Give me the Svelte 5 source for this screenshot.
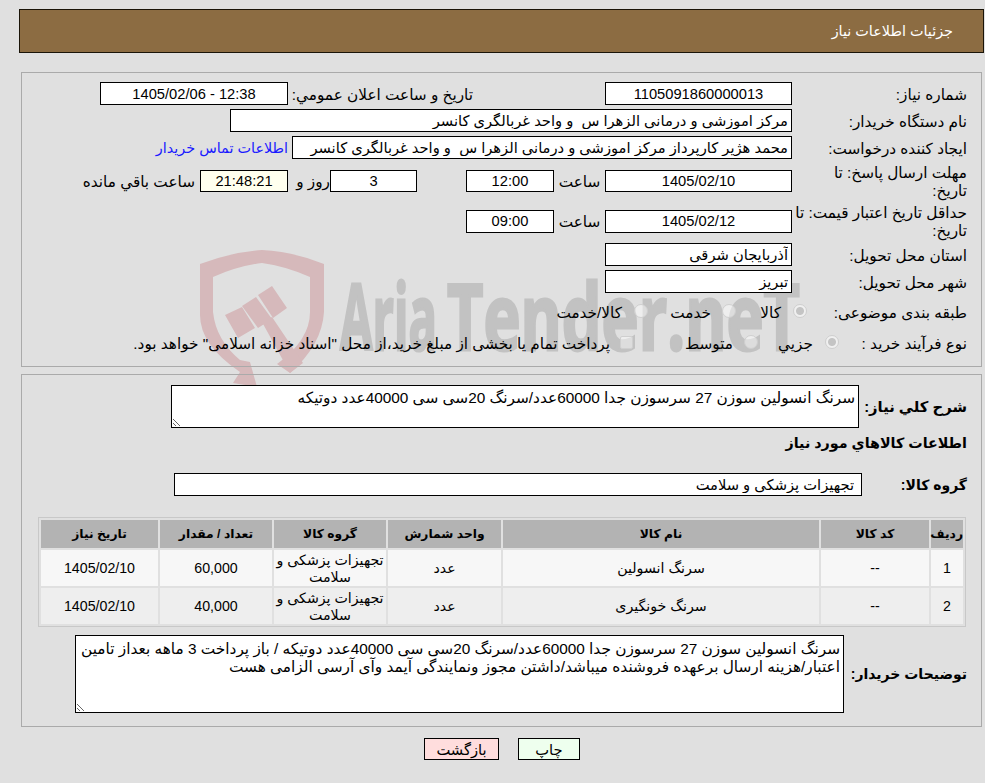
<script>
  const goods = [
    { id: '1', code: '--', name: 'سرنگ انسولین', unit: 'عدد', group: 'تجهیزات پزشکی و سلامت', qty: '60,000', date: '1405/02/10' },
    { id: '2', code: '--', name: 'سرنگ خونگیری', unit: 'عدد', group: 'تجهیزات پزشکی و سلامت', qty: '40,000', date: '1405/02/10' }
  ];
  const summary = 'سرنگ انسولین سوزن 27 سرسوزن جدا 60000عدد/سرنگ 20سی سی 40000عدد دوتیکه';
  const notes = 'سرنگ انسولین سوزن 27 سرسوزن جدا 60000عدد/سرنگ 20سی سی 40000عدد دوتیکه / باز پرداخت 3 ماهه بعداز تامین اعتبار/هزینه ارسال برعهده فروشنده میباشد/داشتن مجوز ونمایندگی آیمد وآی آرسی الزامی هست';
</script>

<div class="page" dir="rtl">
  <svg class="watermark" width="985" height="783" viewBox="0 0 985 783" aria-hidden="true">
    <path class="shield" fill-rule="evenodd" d="M200 264 Q232 252 262 250 Q295 252 324 264 L324 312 Q322 345 290 373 L277 364 Q310 340 310 312 L310 277 Q285 266 262 263 Q238 266 213 277 L213 312 Q216 340 240 360 L250 362 L257 387 L233 383 L240 372 Q200 345 200 315 Z" />
    <path class="shield" d="M225 315 L242 307 L255 328 L238 338 Z M242 306 L256 297 L272 319 L258 328 Z M258 295 L272 286 L287 308 L273 318 Z M262 322 L272 317 L303 363 L290 373 Z" />
    <text class="brand" x="340" y="350" textLength="97" lengthAdjust="spacingAndGlyphs">Aria</text>
    <text class="brand" x="447" y="350" textLength="353" lengthAdjust="spacingAndGlyphs">Tender.neT</text>
  </svg>

  <div class="head">جزئیات اطلاعات نیاز</div>

  <section class="panel top">
    <div class="row">
      <span class="label">شماره نیاز:</span>
      <input class="in date" readonly value="1105091860000013" />
      <span class="announce">تاریخ و ساعت اعلان عمومي:</span>
      <input class="in announce-val" readonly value="12:38 - 1405/02/06" />
    </div>
    <div class="row">
      <span class="label">نام دستگاه خریدار:</span>
      <input class="in left buyer" readonly value="مرکز اموزشی و درمانی الزهرا س  و واحد غربالگری کانسر" />
    </div>
    <div class="row">
      <span class="label">ایجاد کننده درخواست:</span>
      <input class="in left creator" readonly value="محمد هژیر کارپرداز مرکز اموزشی و درمانی الزهرا س  و واحد غربالگری کانسر" />
      <a class="contact" href="#contact">اطلاعات تماس خریدار</a>
    </div>
    <div class="row tall">
      <span class="label">مهلت ارسال پاسخ: تا<br />تاریخ:</span>
      <input class="in date short" readonly value="1405/02/10" />
      <span class="at">ساعت</span>
      <input class="in time short" readonly value="12:00" />
      <input class="in days short" readonly value="3" />
      <span class="day-word">روز و</span>
      <input class="in time short timer" readonly value="21:48:21" />
      <span class="remain">ساعت باقي مانده</span>
    </div>
    <div class="row tall">
      <span class="label">حداقل تاریخ اعتبار قیمت: تا<br />تاریخ:</span>
      <input class="in date" readonly value="1405/02/12" />
      <span class="at">ساعت</span>
      <input class="in time" readonly value="09:00" />
    </div>
    <div class="row">
      <span class="label">استان محل تحویل:</span>
      <input class="in left date" readonly value="آذربایجان شرقی" />
    </div>
    <div class="row">
      <span class="label">شهر محل تحویل:</span>
      <input class="in left date" readonly value="تبریز" />
    </div>
    <div class="row kind">
      <span class="label narrow">طبقه بندی موضوعی:</span>
      <span class="radio on"></span><span class="opt kala">کالا</span>
      <span class="radio"></span><span class="opt service">خدمت</span>
      <span class="radio"></span><span class="opt both">کالا/خدمت</span>
    </div>
    <div class="row process">
      <span class="label tiny">نوع فرآیند خرید :</span>
      <span class="radio on"></span><span class="opt minor">جزيي</span>
      <span class="radio"></span><span class="opt mid">متوسط</span>
      <span class="check"></span>
      <span class="pay">پرداخت تمام یا بخشی از مبلغ خرید،از محل "اسناد خزانه اسلامی" خواهد بود.</span>
    </div>
  </section>

  <section class="panel bottom">
    <div class="summary">
      <b class="blabel sum-label">شرح كلي نياز:</b>
      <textarea class="area sum-area" readonly value={summary}></textarea>
    </div>
    <h3>اطلاعات كالاهاي مورد نياز</h3>
    <div class="group">
      <b class="blabel group-label">گروه کالا:</b>
      <input class="in left group-val" readonly value="تجهیزات پزشکی و سلامت" />
    </div>

    <table>
      <thead>
        <tr>
          <th class="c1">ردیف</th>
          <th class="c2">کد کالا</th>
          <th class="c3">نام کالا</th>
          <th class="c4">واحد شمارش</th>
          <th class="c5">گروه کالا</th>
          <th class="c6">تعداد / مقدار</th>
          <th class="c7">تاریخ نیاز</th>
        </tr>
      </thead>
      <tbody>
        {#each goods as g}
          <tr>
            <td>{g.id}</td>
            <td>{g.code}</td>
            <td>{g.name}</td>
            <td>{g.unit}</td>
            <td class="wrap">{g.group}</td>
            <td>{g.qty}</td>
            <td>{g.date}</td>
          </tr>
        {/each}
      </tbody>
    </table>

    <div class="notes">
      <b class="blabel notes-label">توضیحات خریدار:</b>
      <textarea class="area notes-area" readonly value={notes}></textarea>
    </div>
  </section>

  <div class="actions">
    <button class="btn print">چاپ</button>
    <button class="btn back">بازگشت</button>
  </div>
</div>

<style>
  :global(body) { background: #e0e0e0; }
  .page {
    position: relative; width: 985px; height: 783px; box-sizing: border-box;
    padding-top: 9px; overflow: hidden;
    font-family: "Liberation Sans", "DejaVu Sans", sans-serif; font-size: 15.3px; color: #000;
  }
  .watermark { position: absolute; left: 0; top: 0; z-index: -1; direction: ltr; }
  .shield { fill: #d6b9bb; }
  .brand {
    fill: #c2c2c2; stroke: #c2c2c2; stroke-width: 3px;
    font-family: "Open Sans", sans-serif; font-weight: 700; font-size: 92px;
  }

  .head {
    box-sizing: border-box; width: 965px; height: 44px; margin-right: 1px;
    padding: 13px 30px 0 0;
    background: #8c6c42; border: 1px solid #1a1408; color: #fff; font-size: 14.4px;
  }
  .panel { box-sizing: border-box; width: 961px; margin-right: 3px; border: 1px solid #aaa; padding-right: 14px; }
  .top { height: 295px; margin-top: 19px; padding-top: 7px; }
  .bottom { height: 353px; margin-top: 7px; padding-top: 10px; }

  .row { display: flex; align-items: center; height: 27px; }
  .row.tall { height: 40px; }
  .row.kind { height: 32px; }
  .row.process { height: 30px; }
  .row > span:not(.radio, .check) { padding-top: 2px; }
  .row.kind > span:not(.radio, .check), .row.process > span:not(.radio, .check) { padding-top: 4px; }
  .label { box-sizing: border-box; width: 175px; flex-shrink: 0; white-space: nowrap; line-height: 18px; }
  .label.narrow { width: 160px; }
  .label.tiny { width: 128px; }

  .in {
    box-sizing: border-box; height: 23px; padding: 0 3px; margin: 0;
    border: 1px solid #000; border-radius: 0; background: #fff; color: #000;
    font: inherit; font-size: 14.7px; text-align: center; outline: none;
  }
  .in.short { height: 22px; }
  .in.left { text-align: right; }
  .date { width: 187px; }
  .buyer { width: 562px; }
  .creator { width: 500px; }
  .time { width: 88px; }
  .days { width: 87px; margin-right: 49px; }
  .timer { background: #ffffee; }
  .announce { width: 180px; margin: 0 132px 0 5px; white-space: nowrap; }
  .announce-val { width: 188px; }
  .contact { margin-right: 4px; color: #1a1aff; font-size: 14.4px; text-decoration: none; white-space: nowrap; }
  .at { width: 51px; text-align: center; }
  .day-word { box-sizing: border-box; width: 42px; text-align: right; white-space: nowrap; }
  .remain { padding-right: 5px; white-space: nowrap; }

  .radio {
    box-sizing: border-box; width: 14px; height: 14px; flex-shrink: 0; border-radius: 50%;
    border: 1px solid #cfcfcf; background: rgba(255, 255, 255, 0.45);
  }
  .radio.on { background: radial-gradient(circle, #c4c4c4 0 3.5px, #f0f0f0 4.5px); }
  .check {
    box-sizing: border-box; width: 13px; height: 13px; flex-shrink: 0; border-radius: 2px;
    border: 1px solid #cfcfcf; background: rgba(255, 255, 255, 0.45);
    margin-right: 55px;
  }
  .opt { white-space: nowrap; box-sizing: border-box; }
  .kala { width: 57px; padding-right: 12px; }
  .service { width: 74px; padding-right: 11px; }
  .both { padding-right: 12px; }
  .minor { width: 67px; padding-right: 12px; }
  .mid { width: 56px; padding-right: 11px; }
  .pay { padding-right: 10px; white-space: nowrap; }

  .summary, .group, .notes { display: flex; align-items: center; }
  .blabel { font-size: 14px; flex-shrink: 0; white-space: nowrap; }
  .sum-label { width: 108px; font-size: 14.8px; }
  .group-label { width: 105px; }
  .notes-label { width: 123px; }
  .area {
    box-sizing: border-box; margin: 0; padding: 3px 3px 1px; border: 1px solid #000; border-radius: 0;
    background: #fff; color: #000; font: inherit; font-size: 15.35px; line-height: 18px; outline: none;
  }
  .sum-area { width: 688px; height: 43px; }
  .notes-area { width: 769px; height: 78px; padding-top: 4px; }
  h3 { margin: 0; height: 30px; line-height: 30px; font-size: 14.3px; }
  .group { margin-top: 15px; }
  .group-val { width: 688px; padding-right: 7px; }

  table {
    box-sizing: border-box; width: 928px; margin: 21px 1px 0 0; table-layout: fixed;
    border: 1px solid #c8c8c8; border-spacing: 2px; background: #e0e0e0; font-size: 14.2px;
  }
  th { height: 28px; padding: 0; background: #b3b3b3; font-size: 12.3px; }
  td { height: 35px; padding: 1px 1px 0; background: #f7f7f7; text-align: center; line-height: 17px; }
  tbody tr:nth-child(2) td { background: #eee; }
  .c1 { width: 32px; }
  .c2 { width: 108px; }
  .c3 { width: 316px; }
  .c4 { width: 113px; }
  .c5 { width: 112px; }
  .c6 { width: 112px; }
  .c7 { width: 117px; }

  .notes { margin-top: 8px; }

  .actions { display: flex; justify-content: center; gap: 19px; width: 966px; margin: 11px 0 0 0; }
  .btn {
    box-sizing: border-box; height: 22px; padding: 0; border: 1px solid #000; border-radius: 0;
    color: #000; font: inherit; font-size: 14.7px;
  }
  .back { width: 75px; background: #ffdddd; }
  .print { width: 62px; background: #eeffee; }
</style>
